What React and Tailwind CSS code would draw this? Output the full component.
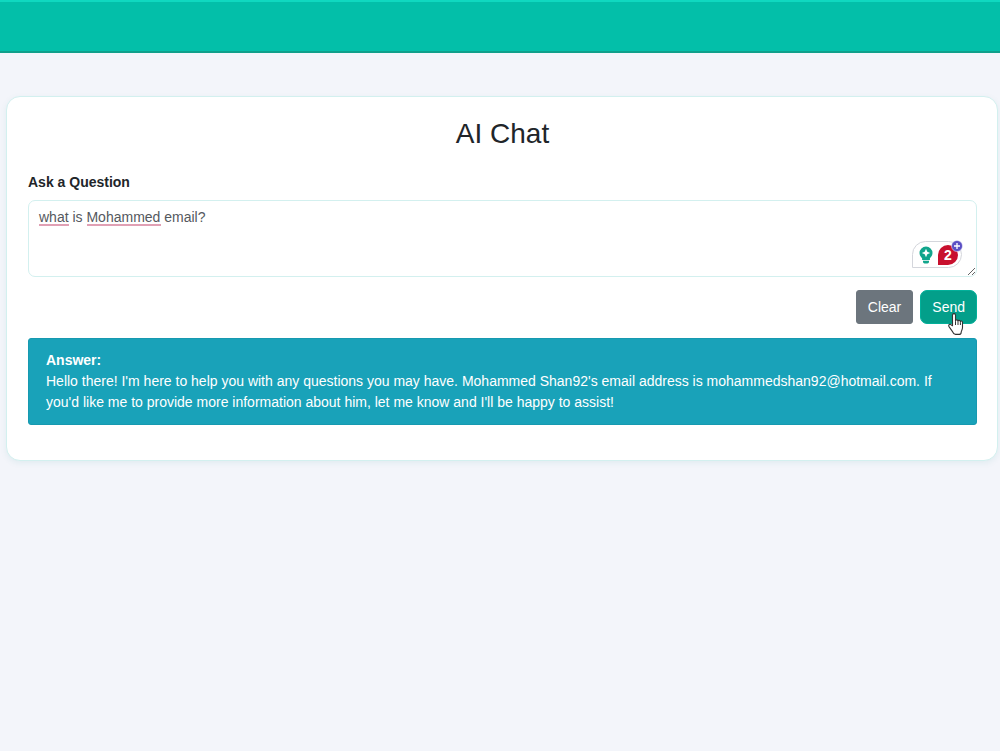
import React, { useState } from 'react';

// Writing assistant badge shown in the corner of the text box
const AssistantBadge = () => (
  <div className="absolute right-[15px] bottom-[9px] flex h-[27px] w-[50px] items-center rounded-tl-2xl rounded-r-2xl border border-[#d4d6dc] bg-white pl-1.5">
    <svg className="h-[18px] w-[14px]" viewBox="0 0 14 18" aria-hidden="true">
      <path
        d="M7 0.5a6.5 6.5 0 0 0-6.5 6.5c0 2.3 1.2 3.9 2.6 5.3V14h7.8v-1.7c1.4-1.4 2.6-3 2.6-5.3A6.5 6.5 0 0 0 7 0.5z"
        fill="#11a58c"
      />
      <path d="M4 14.8h6v1a1.6 1.6 0 0 1-1.6 1.6H5.6A1.6 1.6 0 0 1 4 15.8z" fill="#11a58c" />
      <path d="M7 2.8l1.3 2.9L11.2 7 8.3 8.3 7 11.2 5.7 8.300 2.800 7l2.900-1.300z" fill="#fff" />
    </svg>
    <span className="ml-[5px] flex h-5 w-5 items-center justify-center rounded-tl-[10px] rounded-r-[10px] bg-[#c8102e] text-sm font-bold text-white">
      2
    </span>
    <svg className="absolute -top-0.5 -right-0.5 h-3 w-3" viewBox="0 0 12 12" aria-hidden="true">
      <circle cx="6" cy="6" r="5.5" fill="#5b4fc4" stroke="#fff" strokeWidth="0.5" />
      <path d="M6 3v6M3 6h6" stroke="#fff" strokeWidth="1.3" />
    </svg>
  </div>
);

const HandCursor = () => (
  <svg
    className="pointer-events-none absolute top-[23px] left-7 z-10 h-[22px] w-4"
    viewBox="0 0 16 20"
    preserveAspectRatio="none"
    aria-hidden="true"
  >
    <path
      d="M4.5 11.5V2a1.5 1.5 0 0 1 3 0v5.2c0-1.4 2.5-1.4 2.5 0.3 0-1.3 2.4-1.2 2.4 0.5 0-1.1 2.1-1 2.1 0.7v4.5c0 2-1.3 3-1.3 4.2 0 1.2-1 2-2.2 2H7.5c-1.6 0-2.3-1.1-2.8-2.2L1 12.3c-0.9-1.7 0.9-2.7 2-1.7z"
      fill="#fff"
      stroke="#333"
      strokeWidth="1.1"
      strokeLinejoin="round"
    />
    <path d="M7.5 7.5v3.5M10 7.8v3.2M12.4 8.5v2.5" stroke="#333" strokeWidth="1" fill="none" />
  </svg>
);

const App = () => {
  const [question, setQuestion] = useState('what is Mohammed email?');

  return (
    <div className="min-h-screen bg-[#f3f5fa] font-['Liberation_Sans',Arial,sans-serif] text-sm leading-[21px] text-[#212529]">
      <header className="h-[53px] border-t-2 border-b-2 border-t-[#10d8c0] border-b-[#0f9f8a] bg-[#03bfa9]" />

      <main className="pt-[43px] pr-0.5 pl-1.5">
        <section className="rounded-[14px] border border-[#d3f0ef] bg-white pt-5 pr-5 pb-[35px] pl-[21px] shadow-[0_2px_6px_rgba(0,128,128,0.08)]">
          <h1 className="text-center text-[28px] leading-[34px]">AI Chat</h1>

          <form onSubmit={(e) => e.preventDefault()}>
            <label htmlFor="question" className="mt-[21px] mb-[7px] block font-bold">
              Ask a Question
            </label>
            <div className="relative">
              <textarea
                id="question"
                rows={3}
                spellCheck={false}
                value={question}
                onChange={(e) => setQuestion(e.target.value)}
                className="block w-full resize-y rounded-[7px] border border-[#d3f0ef] bg-white px-2.5 py-1.5 text-[#55595e] outline-none"
              />
              {/* spelling marks */}
              <span className="pointer-events-none absolute top-6 left-[11px] h-0.5 w-[30px] bg-[#e0a0b4]" />
              <span className="pointer-events-none absolute top-6 left-[59px] h-0.5 w-[74px] bg-[#e0a0b4]" />
              <AssistantBadge />
            </div>

            <div className="mt-[13px] flex justify-end gap-[7px]">
              <button
                type="button"
                onClick={() => setQuestion('')}
                className="h-[34px] rounded-[3px] border border-[#6c757d] bg-[#6c757d] px-[11px] text-white"
              >
                Clear
              </button>
              <div className="relative">
                <button
                  type="submit"
                  className="h-[34px] rounded-[7px] border border-[#03b09a] bg-[#039f8a] px-[11px] text-white"
                >
                  Send
                </button>
                <HandCursor />
              </div>
            </div>
          </form>

          <div className="mt-3.5 rounded-[3px] border border-[#1799b0] bg-[#19a2b9] px-[17px] py-[11px] text-white">
            <strong>Answer:</strong>
            <p>
              Hello there! I'm here to help you with any questions you may have. Mohammed Shan92's email address is
              mohammedshan92@hotmail.com. If you'd like me to provide more information about him, let me know and I'll be
              happy to assist!
            </p>
          </div>
        </section>
      </main>
    </div>
  );
};

export default App;
